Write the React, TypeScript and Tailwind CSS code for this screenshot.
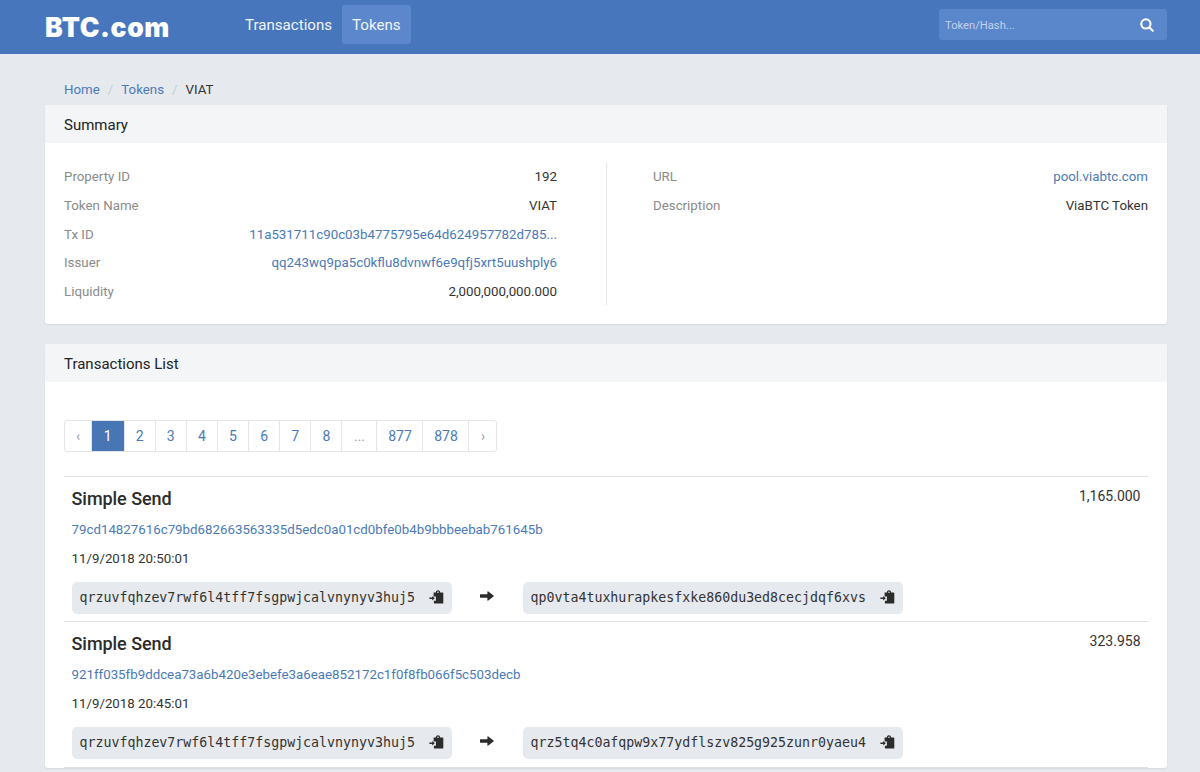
const summaryLeft = [
  { label: 'Property ID', value: '192' },
  { label: 'Token Name', value: 'VIAT' },
  { label: 'Tx ID', value: '11a531711c90c03b4775795e64d624957782d785...', link: true },
  { label: 'Issuer', value: 'qq243wq9pa5c0kflu8dvnwf6e9qfj5xrt5uushply6', link: true },
  { label: 'Liquidity', value: '2,000,000,000.000' },
];

const summaryRight = [
  { label: 'URL', value: 'pool.viabtc.com', link: true },
  { label: 'Description', value: 'ViaBTC Token' },
];

const pages = ['‹', '1', '2', '3', '4', '5', '6', '7', '8', '...', '877', '878', '›'];

const transactions = [
  {
    hash: '79cd14827616c79bd682663563335d5edc0a01cd0bfe0b4b9bbbeebab761645b',
    time: '11/9/2018 20:50:01',
    amount: '1,165.000',
    from: 'qrzuvfqhzev7rwf6l4tff7fsgpwjcalvnynyv3huj5',
    to: 'qp0vta4tuxhurapkesfxke860du3ed8cecjdqf6xvs',
  },
  {
    hash: '921ff035fb9ddcea73a6b420e3ebefe3a6eae852172c1f0f8fb066f5c503decb',
    time: '11/9/2018 20:45:01',
    amount: '323.958',
    from: 'qrzuvfqhzev7rwf6l4tff7fsgpwjcalvnynyv3huj5',
    to: 'qrz5tq4c0afqpw9x77ydflszv825g925zunr0yaeu4',
  },
];

function PasteIcon() {
  return (
    <svg width="15" height="14" viewBox="0 0 15 14" className="mb-[2px] text-[#2b2b2b]" fill="currentColor">
      <path
        fillRule="evenodd"
        d="M4.6 2.6H6.8C7 1 7.8.3 9 .3s2 .7 2.2 2.3h2.4c.4 0 .7.3.7.7v9.6c0 .4-.3.7-.7.7H5.6c-.4 0-.7-.3-.7-.7v-2.2h2V6.4H4.6V2.6zM9 1.5a.8.8 0 1 0 0 1.6.8.8 0 0 0 0-1.6z"
      />
      <path d="M.4 7.6h2.8V6l2.6 2.3-2.6 2.3V9H.4z" />
    </svg>
  );
}

function ArrowIcon() {
  return (
    <svg width="14" height="10" viewBox="0 0 14 10" className="mb-[5px] ml-[28px] mr-[29px] text-[#2b2b2b]" fill="currentColor">
      <path d="M.5 3.3H7.4V.8c0-.5.5-.7.9-.4l5.2 4.1c.3.3.3.7 0 1L8.3 9.6c-.4.3-.9.1-.9-.4V6.7H.5c-.3 0-.5-.2-.5-.5V3.8c0-.3.2-.5.5-.5z" />
    </svg>
  );
}

function SearchIcon() {
  return (
    <svg width="14" height="14" viewBox="0 0 14 14" fill="none" stroke="white" strokeWidth="2.1" strokeLinecap="round">
      <circle cx="5.9" cy="5.9" r="4.6" />
      <path d="M9.4 9.4l3.4 3.4" />
    </svg>
  );
}

function Address({ value }: { value: string }) {
  return (
    <div className="flex h-8 w-[380px] items-center justify-between rounded-[5px] bg-[#e6e9ed] pl-2 pr-[8px]">
      <span className="font-['DejaVu_Sans_Mono',monospace] text-[13.27px] text-[#333]">{value}</span>
      <PasteIcon />
    </div>
  );
}

function SummaryColumn({ rows, className }: { rows: typeof summaryLeft; className: string }) {
  return (
    <div className={`flex flex-col ${className}`}>
      {rows.map((row) => (
        <div key={row.label} className="flex h-[28.6px] items-center justify-between">
          <span className="text-[#8a8a8a]">{row.label}</span>
          <span className={row.link ? 'text-[#4a7ab8]' : 'text-[#333]'}>{row.value}</span>
        </div>
      ))}
    </div>
  );
}

export default function App() {
  return (
    <div className="h-screen overflow-hidden bg-[#e6e9ee] font-['Roboto',sans-serif] text-[13.3px] text-[#333]">
      {/* Header */}
      <header className="flex h-[54px] items-center bg-[#4876bd] pb-[5px] pl-[45px] pr-[33px]">
        <span className="mt-[5px] w-[190px] font-['Inter',sans-serif] text-[26.5px] font-black leading-none tracking-[0.6px] text-white">
          BTC.com
        </span>
        <nav className="flex items-center text-[15.1px] text-[#f0f4fa]">
          <span className="px-[10px] pt-[2px]">Transactions</span>
          <span className="flex h-[39px] items-center rounded-[3px] bg-[#5c87cc] px-[10px] pt-[2px]">Tokens</span>
        </nav>
        <div className="ml-auto flex h-[31px] w-[228px] items-center justify-between rounded-[3px] bg-[#5a86cb] pl-[6px] pr-[13px]">
          <span className="pt-[3px] text-[11.2px] text-[#c3d3ec]">Token/Hash...</span>
          <SearchIcon />
        </div>
      </header>

      <main className="pl-[45px] pr-[33px]">
        {/* Breadcrumb */}
        <div className="flex h-[51px] items-center gap-2 px-[19px] pt-5">
          <span className="text-[#4a7ab8]">Home</span>
          <span className="text-[#c8ccd2]">/</span>
          <span className="text-[#4a7ab8]">Tokens</span>
          <span className="text-[#c8ccd2]">/</span>
          <span className="text-[#333]">VIAT</span>
        </div>

        {/* Summary */}
        <section className="rounded-[3px] bg-white shadow-[0_1px_2px_rgba(0,0,0,0.08)]">
          <div className="flex h-[38px] items-center bg-[#f4f5f6] px-[19px] pt-[2px] text-[15px] text-[#222]">Summary</div>
          <div className="flex h-[181px] px-[19px] pt-5">
            <SummaryColumn rows={summaryLeft} className="w-[493px]" />
            <div className="ml-[49px] mr-[46px] h-[142px] w-px bg-[#e5e7ea]" />
            <SummaryColumn rows={summaryRight} className="flex-1" />
          </div>
        </section>

        {/* Transactions */}
        <section className="mt-5 rounded-[3px] bg-white shadow-[0_1px_2px_rgba(0,0,0,0.08)]">
          <div className="flex h-[38px] items-center bg-[#f4f5f6] px-[19px] pt-[2px] text-[15px] text-[#222]">Transactions List</div>
          <div className="px-[19px] pt-[38px]">
            <div className="flex h-8 w-fit rounded-[3px] border border-[#e3e5e8] text-sm">
              {pages.map((page) => {
                const muted = page === '‹' || page === '›' || page === '...';
                return (
                  <span
                    key={page}
                    className={`flex items-center justify-center border-r border-[#e3e5e8] last:border-r-0 ${
                      page === '877' || page === '878' ? 'w-[46px]' : page === '...' ? 'w-[35px]' : page === '‹' || page === '›' ? 'w-[27px]' : page === '1' ? 'w-[32.5px]' : 'w-[31.15px]'
                    } ${page === '1' ? 'bg-[#4876b4] text-white' : muted ? 'text-[#9aa0a8]' : 'text-[#4a7ab8]'}`}
                  >
                    {page}
                  </span>
                );
              })}
            </div>

            <div className="mt-6">
              {transactions.map((tx) => (
                <div key={tx.hash} className="h-[145.4px] border-t border-[#dfe1e4] px-[7.5px]">
                  <div className="flex items-start justify-between">
                    <h3 className="mt-[9px] text-lg font-medium leading-[26px] tracking-[-0.05px] text-[#2b2b2b]">Simple Send</h3>
                    <span className="mt-[9px] text-sm text-[#333]">{tx.amount}</span>
                  </div>
                  <div className="mt-[8px] leading-5 text-[#4a7ab8]">{tx.hash}</div>
                  <div className="mt-[9px] leading-5 text-[#333]">{tx.time}</div>
                  <div className="mt-[13px] flex items-center">
                    <Address value={tx.from} />
                    <ArrowIcon />
                    <Address value={tx.to} />
                  </div>
                </div>
              ))}
              <div className="border-t border-[#dfe1e4]" />
            </div>
          </div>
        </section>
      </main>
    </div>
  );
}
